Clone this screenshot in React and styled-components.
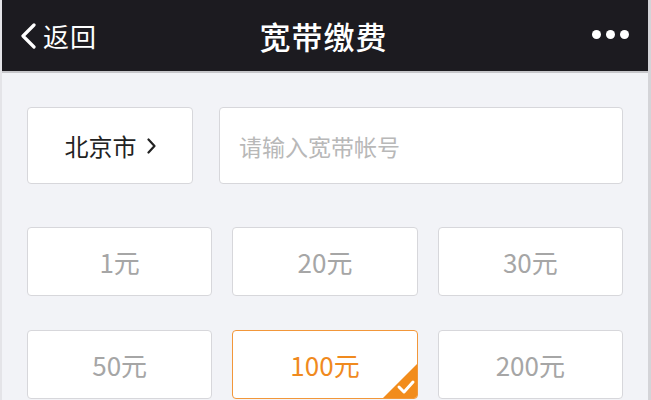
import React from "react";
import styled, { createGlobalStyle } from "styled-components";

const Global = createGlobalStyle`
  html, body { margin: 0; padding: 0; background: #f2f3f7; }
  body { font-family: "Noto Sans CJK SC", "Noto Sans", sans-serif; }
`;

const Page = styled.div`
  width: 651px;
  height: 400px;
  overflow: hidden;
  box-sizing: border-box;
  background: #f2f3f7;
  border-left: 2px solid #e4e4e8;
  border-right: 3px solid #d4d4d8;
  position: relative;
`;

const Header = styled.header`
  height: 71px;
  background: #1c1b20;
  border-bottom: 2px solid #c6c6ca;
  display: grid;
  grid-template-columns: 1fr auto 1fr;
  align-items: center;
  padding: 0 22px 0 18px;
  box-sizing: content-box;
  margin: 0 -3px 0 -2px;
`;

const Back = styled.div`
  display: flex;
  align-items: center;
  gap: 5px;
  color: #ffffff;
  font-size: 26px;
  letter-spacing: 1px;
`;

const Title = styled.h1`
  margin: 0;
  color: #ffffff;
  font-size: 31px;
  font-weight: 500;
  letter-spacing: 1px;
`;

const Dots = styled.div`
  justify-self: end;
  display: flex;
  gap: 5px;
  padding-bottom: 2px;
`;

const Dot = styled.span`
  width: 9px;
  height: 9px;
  border-radius: 50%;
  background: #ffffff;
`;

const Content = styled.main`
  padding: 34px 25px 0 25px;
`;

const TopRow = styled.div`
  display: flex;
  gap: 26px;
`;

const Box = styled.div`
  box-sizing: border-box;
  background: #ffffff;
  border: 1px solid ${(p) => (p.$active ? "#f2973a" : "#d7d7db")};
  border-radius: 4px;
  display: flex;
  align-items: center;
  position: relative;
  overflow: hidden;
`;

const CityBox = styled(Box)`
  width: 166px;
  height: 77px;
  justify-content: center;
  color: #222222;
  font-size: 24px;
  gap: 10px;
`;

const InputBox = styled(Box)`
  flex: 1;
  height: 77px;
  padding-left: 19px;
  color: #b8b8b8;
  font-size: 23px;
`;

const Grid = styled.div`
  margin-top: 43px;
  display: grid;
  grid-template-columns: repeat(3, 1fr);
  column-gap: 20px;
  row-gap: 34px;
`;

const Amount = styled(Box)`
  height: 69px;
  justify-content: center;
  font-size: 26px;
  font-weight: 400;
  color: ${(p) => (p.$active ? "#f08a1e" : "#a6a6a6")};
`;

const Corner = styled.svg`
  position: absolute;
  right: -1px;
  bottom: -1px;
`;

const amounts = ["1元", "20元", "30元", "50元", "100元", "200元"];

export default function App() {
  return (
    <Page>
      <Global />
      <Header>
        <Back>
          <svg width="20" height="26" viewBox="0 0 20 26">
            <path d="M16 2 L5 13 L16 24" fill="none" stroke="#fff" strokeWidth="3.2" strokeLinecap="round" strokeLinejoin="round" />
          </svg>
          <span>返回</span>
        </Back>
        <Title>宽带缴费</Title>
        <Dots>
          <Dot />
          <Dot />
          <Dot />
        </Dots>
      </Header>
      <Content>
        <TopRow>
          <CityBox>
            <span>北京市</span>
            <svg width="9" height="16" viewBox="0 0 9 16">
              <path d="M1.5 1.5 L7.5 8 L1.5 14.5" fill="none" stroke="#222" strokeWidth="2.2" strokeLinecap="round" strokeLinejoin="round" />
            </svg>
          </CityBox>
          <InputBox>请输入宽带帐号</InputBox>
        </TopRow>
        <Grid>
          {amounts.map((a) => {
            const active = a === "100元";
            return (
              <Amount key={a} $active={active}>
                {a}
                {active && (
                  <Corner width="36" height="36" viewBox="0 0 36 36">
                    <path d="M36 0 L36 36 L0 36 Z" fill="#f28c1c" />
                    <path d="M17 24 L22 29 L31 19" fill="none" stroke="#fff" strokeWidth="3" strokeLinecap="round" strokeLinejoin="round" />
                  </Corner>
                )}
              </Amount>
            );
          })}
        </Grid>
      </Content>
    </Page>
  );
}
